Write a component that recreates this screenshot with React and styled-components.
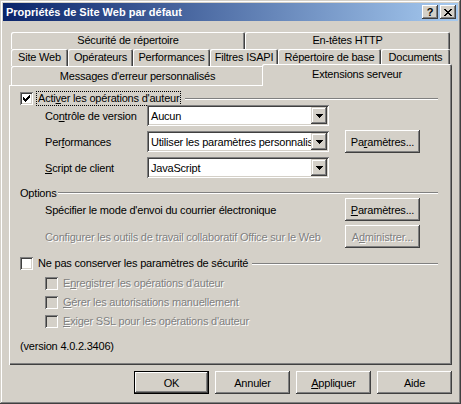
import React from "react";
import styled, { createGlobalStyle } from "styled-components";

const GlobalStyle = createGlobalStyle`
  html, body { margin: 0; padding: 0; background: #d4d0c8; }
  body {
    font-family: "Liberation Sans", Arial, sans-serif;
    font-size: 11px;
    letter-spacing: -0.2px;
    color: #000;
  }
  * { box-sizing: border-box; }
  u { text-decoration: underline; text-underline-offset: 1px; }
`;

const Window = styled.div`
  width: 461px;
  height: 404px;
  padding: 3px;
  background: #d4d0c8;
  display: flex;
  flex-direction: column;
  box-shadow: inset -1px -1px #404040, inset 1px 1px #d4d0c8,
    inset -2px -2px #808080, inset 2px 2px #fff;
`;

const TitleBar = styled.div`
  height: 18px;
  display: flex;
  align-items: center;
  justify-content: space-between;
  padding: 0 2px 0 3px;
  background: linear-gradient(to right, #0a246a, #a6caf0);
`;

const Title = styled.span`
  color: #fff;
  font-weight: bold;
  font-size: 11px;
  letter-spacing: 0;
`;

const CaptionButtons = styled.div`
  display: flex;
  gap: 2px;
`;

const CaptionButton = styled.div`
  width: 16px;
  height: 14px;
  display: flex;
  align-items: center;
  justify-content: center;
  background: #d4d0c8;
  font-weight: bold;
  font-size: 11px;
  box-shadow: inset -1px -1px #404040, inset 1px 1px #fff,
    inset -2px -2px #808080;
`;

const Client = styled.div`
  flex: 1;
  display: flex;
  flex-direction: column;
  padding: 11px 6px 7px 6px;
`;

const Tabs = styled.div`
  display: flex;
  flex-direction: column;
  padding: 0 2px;
`;

const TabRow = styled.div`
  display: flex;
  align-items: flex-start;
  height: ${(p) => p.$h}px;
`;

const Tab = styled.div`
  flex: none;
  width: ${(p) => p.$w}px;
  height: 100%;
  display: flex;
  justify-content: center;
  padding-top: ${(p) => p.$pt || 2}px;
  background: #d4d0c8;
  border-radius: 2px 2px 0 0;
  box-shadow: inset 1px 1px #fff, inset -1px 0 #404040, inset -2px 0 #808080;
  line-height: 13px;
  white-space: nowrap;

  &.active {
    position: relative;
    z-index: 1;
    width: ${(p) => p.$w + 4}px;
    height: calc(100% + 3px);
    margin: -2px -2px 0 -2px;
  }
`;

const Panel = styled.div`
  height: 280px;
  display: flex;
  flex-direction: column;
  padding: 7px 14px 0 11px;
  box-shadow: inset 1px 1px #fff, inset -1px -1px #404040,
    inset -2px -2px #808080;
`;

const GroupHeader = styled.div`
  display: flex;
  align-items: center;
  height: 13px;
  margin-top: ${(p) => p.$mt || 0}px;
`;

const EtchedLine = styled.div`
  flex: 1;
  height: 2px;
  margin-left: ${(p) => p.$ml || 3}px;
  border-top: 1px solid #808080;
  border-bottom: 1px solid #fff;
`;

const Box = styled.span`
  flex: none;
  width: 13px;
  height: 13px;
  display: flex;
  align-items: center;
  justify-content: center;
  background: ${(p) => (p.$disabled ? "#d4d0c8" : "#fff")};
  box-shadow: inset 1px 1px #808080, inset -1px -1px #fff,
    inset 2px 2px #404040, inset -2px -2px #d4d0c8;
`;

const CheckLabel = styled.span`
  margin-left: ${(p) => (p.$focus ? 4 : 5)}px;
  padding: 0 ${(p) => (p.$focus ? 1 : 0)}px;
  line-height: 13px;
  white-space: nowrap;
  outline: ${(p) => (p.$focus ? "1px dotted #000" : "none")};
  color: ${(p) => (p.$disabled ? "#808080" : "#000")};
  text-shadow: ${(p) => (p.$disabled ? "1px 1px 0 #fff" : "none")};
`;

const FormGrid = styled.div`
  display: grid;
  grid-template-columns: 102px 182px 91px;
  grid-auto-rows: 21px;
  row-gap: 5px;
  align-items: center;
  padding-left: 25px;

  & > :nth-child(3n) {
    justify-self: end;
  }
`;

const Combo = styled.div`
  height: 21px;
  display: flex;
  align-items: center;
  padding: 2px;
  background: #fff;
  box-shadow: inset 1px 1px #808080, inset -1px -1px #fff,
    inset 2px 2px #404040, inset -2px -2px #d4d0c8;
`;

const ComboText = styled.span`
  flex: 1;
  padding-left: 2px;
  overflow: hidden;
  white-space: nowrap;
`;

const ComboArrow = styled.span`
  flex: none;
  width: 16px;
  height: 17px;
  display: flex;
  align-items: center;
  justify-content: center;
  background: #d4d0c8;
  box-shadow: inset -1px -1px #404040, inset 1px 1px #d4d0c8,
    inset -2px -2px #808080, inset 2px 2px #fff;
`;

const Button = styled.div`
  width: 75px;
  height: 23px;
  display: flex;
  align-items: center;
  justify-content: center;
  padding-top: 1px;
  background: #d4d0c8;
  white-space: nowrap;
  color: ${(p) => (p.$disabled ? "#808080" : "#000")};
  text-shadow: ${(p) => (p.$disabled ? "1px 1px 0 #fff" : "none")};
  box-shadow: ${(p) =>
    p.$default
      ? "inset 0 0 0 1px #000, inset -2px -2px #404040, inset 2px 2px #fff, inset -3px -3px #808080"
      : "inset -1px -1px #404040, inset 1px 1px #fff, inset -2px -2px #808080, inset 2px 2px #d4d0c8"};
`;

const OptionRow = styled.div`
  display: grid;
  grid-template-columns: 300px 75px;
  height: 23px;
  align-items: center;
  padding-left: 25px;
  margin-top: ${(p) => p.$mt || 0}px;
`;

const Text = styled.span`
  white-space: nowrap;
  color: ${(p) => (p.$disabled ? "#808080" : "#000")};
  text-shadow: ${(p) => (p.$disabled ? "1px 1px 0 #fff" : "none")};
`;

const SubCheck = styled.div`
  display: flex;
  align-items: center;
  height: 13px;
  padding-left: 25px;
  margin-top: ${(p) => p.$mt || 0}px;
`;

const Version = styled.div`
  line-height: 13px;
  margin-top: 12px;
`;

const ButtonBar = styled.div`
  display: flex;
  justify-content: flex-end;
  gap: 6px;
  margin-top: 6px;
`;

function CheckMark() {
  const cols = [2, 3, 4, 3, 2, 1, 0];
  return (
    <svg width="7" height="7" viewBox="0 0 7 7" shapeRendering="crispEdges">
      {cols.map((y, x) => (
        <rect key={x} x={x} y={y} width="1" height="3" fill="#000" />
      ))}
    </svg>
  );
}

function Arrow() {
  return (
    <svg width="7" height="4" viewBox="0 0 7 4" shapeRendering="crispEdges">
      <path d="M0 0h7v1h-1v1h-1v1h-1v1h-1v-1h-1v-1h-1v-1h-1z" fill="#000" />
    </svg>
  );
}

function CloseGlyph() {
  return (
    <svg width="8" height="7" viewBox="0 0 8 7" shapeRendering="crispEdges">
      <path
        d="M0 0h2v1h1v1h2v-1h1v-1h2v1h-1v1h-1v1h-1v1h1v1h1v1h1v1h-2v-1h-1v-1h-2v1h-1v1h-2v-1h1v-1h1v-1h1v-1h-1v-1h-1v-1h-1z"
        fill="#000"
      />
    </svg>
  );
}

function Checkbox({ checked, disabled }) {
  return <Box $disabled={disabled}>{checked && <CheckMark />}</Box>;
}

function Select({ value }) {
  return (
    <Combo>
      <ComboText>{value}</ComboText>
      <ComboArrow>
        <Arrow />
      </ComboArrow>
    </Combo>
  );
}

export default function App() {
  return (
    <>
      <GlobalStyle />
      <Window>
        <TitleBar>
          <Title>Propriétés de Site Web par défaut</Title>
          <CaptionButtons>
            <CaptionButton>?</CaptionButton>
            <CaptionButton>
              <CloseGlyph />
            </CaptionButton>
          </CaptionButtons>
        </TitleBar>
        <Client>
          <Tabs>
            <TabRow $h={17}>
              <Tab $w={234}>Sécurité de répertoire</Tab>
              <Tab $w={205}>En-têtes HTTP</Tab>
            </TabRow>
            <TabRow $h={17}>
              <Tab $w={57}>Site Web</Tab>
              <Tab $w={65}>Opérateurs</Tab>
              <Tab $w={77}>Performances</Tab>
              <Tab $w={68}>Filtres ISAPI</Tab>
              <Tab $w={103}>Répertoire de base</Tab>
              <Tab $w={69}>Documents</Tab>
            </TabRow>
            <TabRow $h={19}>
              <Tab $w={253} $pt={4}>Messages d'erreur personnalisés</Tab>
              <Tab $w={186} $pt={4} className="active">Extensions serveur</Tab>
            </TabRow>
          </Tabs>
          <Panel>
            <GroupHeader>
              <Checkbox checked />
              <CheckLabel $focus>
                Acti<u>v</u>er les opérations d'auteur
              </CheckLabel>
              <EtchedLine $ml={5} />
            </GroupHeader>
            <FormGrid>
              <Text>
                Co<u>n</u>trôle de version
              </Text>
              <Select value="Aucun" />
              <span />
              <Text>
                Per<u>f</u>ormances
              </Text>
              <Select value="Utiliser les paramètres personnalisés" />
              <Button>
                Pa<u>r</u>amètres...
              </Button>
              <Text>
                <u>S</u>cript de client
              </Text>
              <Select value="JavaScript" />
              <span />
            </FormGrid>

            <GroupHeader $mt={8}>
              <Text>Options</Text>
              <EtchedLine $ml={1} />
            </GroupHeader>
            <OptionRow $mt={-1}>
              <Text>Spécifier le mode d'envoi du courrier électronique</Text>
              <Button>
                <u>P</u>aramètres...
              </Button>
            </OptionRow>
            <OptionRow $mt={4}>
              <Text $disabled>
                Configurer les outils de travail collaboratif Office sur le Web
              </Text>
              <Button $disabled>
                A<u>d</u>ministrer...
              </Button>
            </OptionRow>

            <GroupHeader $mt={9}>
              <Checkbox />
              <CheckLabel>Ne pas conserver les paramètres de sécurité</CheckLabel>
              <EtchedLine $ml={4} />
            </GroupHeader>
            <SubCheck $mt={7}>
              <Checkbox disabled />
              <CheckLabel $disabled>
                E<u>n</u>registrer les opérations d'auteur
              </CheckLabel>
            </SubCheck>
            <SubCheck $mt={6}>
              <Checkbox disabled />
              <CheckLabel $disabled>
                <u>G</u>érer les autorisations manuellement
              </CheckLabel>
            </SubCheck>
            <SubCheck $mt={6}>
              <Checkbox disabled />
              <CheckLabel $disabled>
                <u>E</u>xiger SSL pour les opérations d'auteur
              </CheckLabel>
            </SubCheck>
            <Version>(version 4.0.2.3406)</Version>
          </Panel>
          <ButtonBar>
            <Button $default>OK</Button>
            <Button>Annuler</Button>
            <Button>
              <u>A</u>ppliquer
            </Button>
            <Button>Aide</Button>
          </ButtonBar>
        </Client>
      </Window>
    </>
  );
}
